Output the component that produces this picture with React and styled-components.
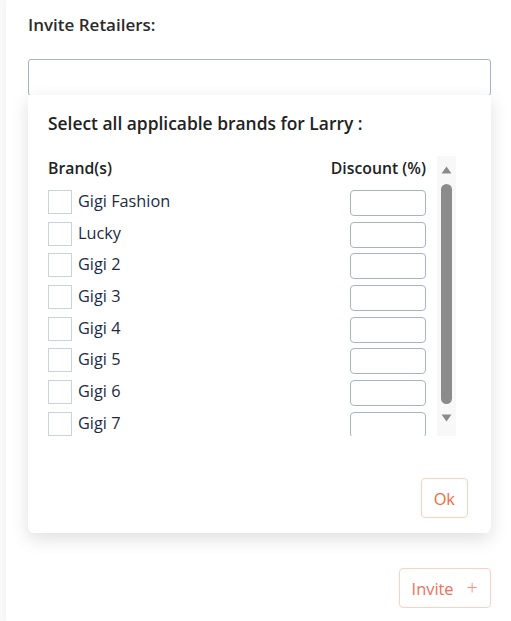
import React from "react";
import styled, { createGlobalStyle } from "styled-components";

const Global = createGlobalStyle`
  html, body { margin: 0; padding: 0; background: #ffffff; }
  body { font-family: "Open Sans", "Liberation Sans", sans-serif; }
  * { box-sizing: border-box; }
`;

const Page = styled.div`
  width: 511px;
  height: 621px;
  overflow: hidden;
  background: #f9f9f9;
  padding-left: 6px;
`;

const Card = styled.div`
  background: #ffffff;
  height: 100%;
  padding: 14px 20px 0 22px;
  box-shadow: -1px 0 3px rgba(0, 0, 0, 0.03);
`;

const Label = styled.div`
  font-size: 17px;
  line-height: 22px;
  font-weight: 600;
  color: #2b2b2b;
`;

const Field = styled.div`
  position: relative;
  margin-top: 23px;
`;

const TextInput = styled.div`
  height: 37px;
  border: 1px solid #a7b3c6;
  border-radius: 3px;
  background: #fff;
`;

const Dropdown = styled.div`
  position: absolute;
  left: 0;
  right: 0;
  top: 36px;
  background: #fff;
  border-radius: 0 0 6px 6px;
  box-shadow: 0 6px 18px rgba(0, 0, 0, 0.13);
  padding: 15px 35px 15px 20px;
  z-index: 2;
`;

const Title = styled.div`
  font-size: 17.4px;
  line-height: 26px;
  font-weight: 600;
  color: #222;
`;

const ListArea = styled.div`
  margin-top: 20px;
  height: 280px;
  display: grid;
  grid-template-columns: 1fr 19px;
  column-gap: 11px;
`;

const List = styled.div`
  overflow: hidden;
  display: flex;
  flex-direction: column;
`;

const HeaderRow = styled.div`
  display: flex;
  justify-content: space-between;
  align-items: center;
  height: 24px;
  margin-top: 1px;
  font-size: 15.8px;
  font-weight: 600;
  color: #222;
  margin-bottom: 11px;
`;

const Row = styled.div`
  display: flex;
  align-items: flex-start;
  flex: none;
  height: 26px;
  margin-bottom: 5.7px;
`;

const Check = styled.span`
  width: 24px;
  height: 24px;
  border: 1px solid #c9d3df;
  background: #fff;
  flex: none;
`;

const BrandName = styled.span`
  margin-left: 6px;
  font-size: 16.3px;
  line-height: 22px;
  color: #1d2a45;
  flex: 1;
`;

const Discount = styled.span`
  width: 76px;
  height: 26px;
  border: 1px solid #a7b3c6;
  border-radius: 4px;
  background: #fff;
  flex: none;
`;

const Scrollbar = styled.div`
  background: #f8f8f8;
  display: flex;
  flex-direction: column;
  align-items: center;
`;

const ArrowBox = styled.div`
  height: 28px;
  display: flex;
  align-items: center;
  justify-content: center;
  flex: none;
`;

const Thumb = styled.div`
  width: 11px;
  height: 220px;
  border-radius: 6px;
  background: #8b8b8b;
`;

const Actions = styled.div`
  display: flex;
  justify-content: flex-end;
  margin-top: 42px;
  margin-right: -12px;
`;

const OutlineButton = styled.button`
  height: 40px;
  padding: 0 12px;
  border: 1px solid #fdd0c0;
  border-radius: 4px;
  background: #fff;
  color: ${(p) => p.$color || "#f26b3a"};
  font-family: "Open Sans", "Liberation Sans", sans-serif;
  font-size: 16.4px;
  display: inline-flex;
  align-items: center;
  gap: 13px;
`;

const Footer = styled.div`
  display: flex;
  justify-content: flex-end;
  margin-top: 472px;
`;

const Plus = styled.span`
  font-size: 20px;
  font-weight: 300;
  line-height: 1;
  color: #f5927a;
`;

const brands = ["Gigi Fashion", "Lucky", "Gigi 2", "Gigi 3", "Gigi 4", "Gigi 5", "Gigi 6", "Gigi 7"];

export default function App() {
  return (
    <>
      <Global />
      <Page>
        <Card>
          <Label>Invite Retailers:</Label>
          <Field>
            <TextInput />
            <Dropdown>
              <Title>Select all applicable brands for Larry :</Title>
              <ListArea>
                <List>
                  <HeaderRow>
                    <span>Brand(s)</span>
                    <span>Discount (%)</span>
                  </HeaderRow>
                  {brands.map((b) => (
                    <Row key={b}>
                      <Check />
                      <BrandName>{b}</BrandName>
                      <Discount />
                    </Row>
                  ))}
                </List>
                <Scrollbar>
                  <ArrowBox>
                    <svg width="11" height="8" viewBox="0 0 11 8">
                      <path d="M5.5 0.5 L10.5 7.5 L0.5 7.5 Z" fill="#8b8b8b" />
                    </svg>
                  </ArrowBox>
                  <Thumb />
                  <ArrowBox>
                    <svg width="11" height="8" viewBox="0 0 11 8">
                      <path d="M0.5 0.5 L10.5 0.5 L5.5 7.5 Z" fill="#8b8b8b" />
                    </svg>
                  </ArrowBox>
                </Scrollbar>
              </ListArea>
              <Actions>
                <OutlineButton>Ok</OutlineButton>
              </Actions>
            </Dropdown>
          </Field>
          <Footer>
            <OutlineButton $color="#f0705a">
              Invite <Plus>+</Plus>
            </OutlineButton>
          </Footer>
        </Card>
      </Page>
    </>
  );
}
